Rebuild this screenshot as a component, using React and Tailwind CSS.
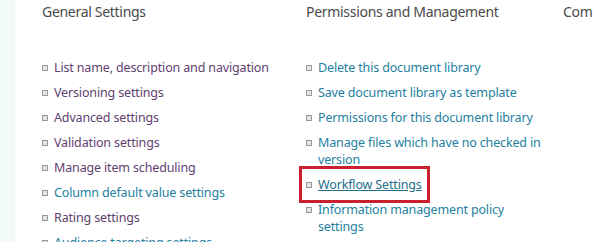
import React from 'react'

const general = [
  { label: 'List name, description and navigation', visited: true },
  { label: 'Versioning settings', visited: true },
  { label: 'Advanced settings', visited: true },
  { label: 'Validation settings', visited: true },
  { label: 'Manage item scheduling', visited: true },
  { label: 'Column default value settings' },
  { label: 'Rating settings', visited: true },
  { label: 'Audience targeting settings' },
]

const permissions = [
  { label: 'Delete this document library' },
  { label: 'Save document library as template' },
  { label: 'Permissions for this document library' },
  { label: 'Manage files which have no checked in version' },
  { label: 'Workflow Settings', highlight: true },
  { label: 'Information management policy settings' },
]

function Bullet() {
  return (
    <span className="mt-[6px] w-[6px] h-[6px] shrink-0 border border-[#9a9a9a] bg-[#e4e4e4]" />
  )
}

function Item({ label, visited, highlight }) {
  const color = visited ? 'text-[#5f416f]' : 'text-[#24809f]'
  if (highlight) {
    return (
      <li className="-ml-[7px] -my-[10px] w-fit border-[3px] border-[#c8202c] pl-[4px] pr-[5px] py-[7px] flex gap-[6px]">
        <Bullet />
        <a className="text-[#1d6f8c] underline whitespace-nowrap">{label}</a>
      </li>
    )
  }
  return (
    <li className="flex gap-[6px]">
      <Bullet />
      <a className={color}>{label}</a>
    </li>
  )
}

function Column({ title, items, width }) {
  return (
    <div className={`${width} shrink-0`}>
      <h3 className="text-[14px] leading-[20px] tracking-[-0.3px] text-[#4a4a4a]">{title}</h3>
      <ul className="mt-[37px] flex flex-col gap-[8px] text-[12.5px] leading-[17px] tracking-[-0.15px]">
        {items.map((it) => (
          <Item key={it.label} {...it} />
        ))}
      </ul>
    </div>
  )
}

export default function App() {
  return (
    <div
      className="relative w-[593px] h-[242px] overflow-hidden bg-white flex"
      style={{ fontFamily: '"Noto Sans", "Open Sans", sans-serif' }}
    >
      <div className="w-[15px] shrink-0 bg-[#f3fbfa] border-r border-[#eef7f6]" />
      <div className="flex pl-[27px] pt-[2px]">
        <Column title="General Settings" items={general} width="w-[264px]" />
        <Column title="Permissions and Management" items={permissions} width="w-[240px]" />
        <div className="shrink-0 pl-[17px]">
          <h3 className="text-[14px] leading-[20px] tracking-[-0.3px] text-[#4a4a4a] whitespace-nowrap">Communications</h3>
        </div>
      </div>
    </div>
  )
}
